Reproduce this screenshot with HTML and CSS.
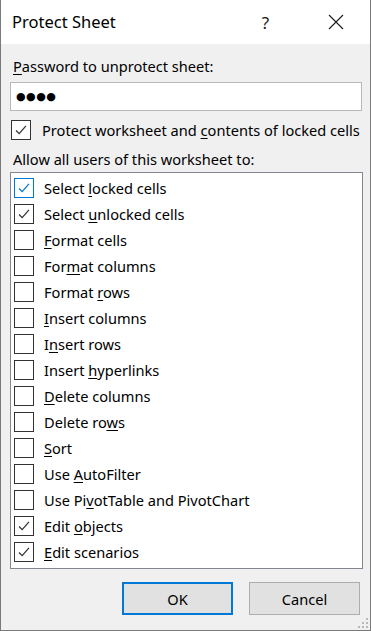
FILE: index.html
```html
<!DOCTYPE html>
<html lang="en">
<head>
  <meta charset="UTF-8">
  <title>Protect Sheet</title>
  <link rel="stylesheet" href="styles.css">
</head>
<body>
  <div class="dialog">
    <div class="titlebar">
      <span class="title">Protect Sheet</span>
      <span class="cap-btn help">?</span>
      <span class="cap-btn close">
        <svg width="16" height="16" viewBox="0 0 16 16"><path d="M1 1L15 15M15 1L1 15" stroke="#1a1a1a" stroke-width="1.1" fill="none"/></svg>
      </span>
    </div>

    <div class="content">
      <div class="label"><u>P</u>assword to unprotect sheet:</div>
      <div class="password"><span class="dots">&#9679;&#9679;&#9679;&#9679;</span></div>

      <label class="check-row protect">
        <span class="box checked">
          <svg viewBox="0 0 20 20"><path d="M4.5 10.5L8 14L15.5 5.5"/></svg>
        </span>
        <span>Protect worksheet and <u>c</u>ontents of locked cells</span>
      </label>

      <div class="label allow">Allow all users of this worksheet to:</div>

      <div class="listbox">
        <div class="item"><span class="box checked focus"><svg viewBox="0 0 20 20"><path d="M4.5 10.5L8 14L15.5 5.5"/></svg></span><span>Select <u>l</u>ocked cells</span></div>
        <div class="item"><span class="box checked"><svg viewBox="0 0 20 20"><path d="M4.5 10.5L8 14L15.5 5.5"/></svg></span><span>Select <u>u</u>nlocked cells</span></div>
        <div class="item"><span class="box"></span><span><u>F</u>ormat cells</span></div>
        <div class="item"><span class="box"></span><span>For<u>m</u>at columns</span></div>
        <div class="item"><span class="box"></span><span>Format <u>r</u>ows</span></div>
        <div class="item"><span class="box"></span><span><u>I</u>nsert columns</span></div>
        <div class="item"><span class="box"></span><span>I<u>n</u>sert rows</span></div>
        <div class="item"><span class="box"></span><span>Insert <u>h</u>yperlinks</span></div>
        <div class="item"><span class="box"></span><span><u>D</u>elete columns</span></div>
        <div class="item"><span class="box"></span><span>Delete ro<u>w</u>s</span></div>
        <div class="item"><span class="box"></span><span><u>S</u>ort</span></div>
        <div class="item"><span class="box"></span><span>Use <u>A</u>utoFilter</span></div>
        <div class="item"><span class="box"></span><span>Use Pi<u>v</u>otTable and PivotChart</span></div>
        <div class="item"><span class="box checked"><svg viewBox="0 0 20 20"><path d="M4.5 10.5L8 14L15.5 5.5"/></svg></span><span>Edit <u>o</u>bjects</span></div>
        <div class="item"><span class="box checked"><svg viewBox="0 0 20 20"><path d="M4.5 10.5L8 14L15.5 5.5"/></svg></span><span><u>E</u>dit scenarios</span></div>
      </div>

      <div class="buttons">
        <button class="btn default">OK</button>
        <button class="btn">Cancel</button>
      </div>
    </div>

    <svg class="grip" width="12" height="12" viewBox="0 0 12 12">
      <rect x="9" y="1" width="2" height="2" fill="#b8b8b8"/>
      <rect x="5" y="5" width="2" height="2" fill="#b8b8b8"/>
      <rect x="9" y="5" width="2" height="2" fill="#b8b8b8"/>
      <rect x="1" y="9" width="2" height="2" fill="#b8b8b8"/>
      <rect x="5" y="9" width="2" height="2" fill="#b8b8b8"/>
      <rect x="9" y="9" width="2" height="2" fill="#b8b8b8"/>
    </svg>
  </div>
</body>
</html>
```

FILE: styles.css
```css
* {
  padding: 0;
  margin: 0;
  box-sizing: border-box;
}

body {
  background: #f0f0f0;
  font-family: "Noto Sans", "Liberation Sans", sans-serif;
  font-size: 14.6px;
  color: #000000;
}

u {
  text-decoration-thickness: 1px;
  text-underline-offset: 2px;
}

.dialog {
  position: relative;
  width: 371px;
  height: 631px;
  background: #f0f0f0;
  border: 1px solid #7a7a7a;
  border-top: none;
  display: flex;
  flex-direction: column;
}

.titlebar {
  height: 44px;
  background: #ffffff;
  display: flex;
  align-items: center;
  padding-left: 11px;
}

.title {
  flex: 1;
  font-size: 16.5px;
  padding-bottom: 1px;
}

.cap-btn {
  width: 69px;
  height: 44px;
  display: flex;
  align-items: center;
  justify-content: center;
}

.help {
  font-size: 17px;
  color: #1a1a1a;
  margin-right: 1px;
}

.close svg {
  display: block;
}

.content {
  flex: 1;
  display: flex;
  flex-direction: column;
  padding: 0 9px;
}

.label {
  margin: 12px 0 0 3px;
  line-height: 20px;
}

.password {
  margin-top: 6px;
  height: 29px;
  width: 352px;
  background: #ffffff;
  border: 1px solid #b9b9b9;
  padding-left: 5px;
  display: flex;
  align-items: center;
}

.dots {
  font-family: "DejaVu Sans", sans-serif;
  font-size: 11px;
  letter-spacing: 0.5px;
}

.check-row {
  display: flex;
  align-items: center;
  gap: 11px;
  margin-top: 9px;
  padding-left: 1px;
  height: 20px;
  white-space: nowrap;
}

.allow {
  margin-top: 9px;
}

.box {
  width: 20px;
  height: 20px;
  flex: none;
  border: 1px solid #333333;
  background: #ffffff;
  display: flex;
}

.box svg {
  display: none;
  width: 18px;
  height: 18px;
}

.box.checked svg {
  display: block;
}

.box path {
  fill: none;
  stroke: #333333;
  stroke-width: 1.4;
}

.box.focus {
  border-color: #0078d7;
}

.box.focus path {
  stroke: #0078d7;
}

.listbox {
  margin-top: 3px;
  width: 353px;
  height: 397px;
  background: #ffffff;
  border: 1px solid #828790;
  padding: 2px 0 0 3px;
}

.item {
  height: 26px;
  display: flex;
  align-items: center;
  gap: 10px;
  white-space: nowrap;
}

.buttons {
  display: flex;
  justify-content: flex-end;
  gap: 16px;
  margin-top: 13px;
  padding-right: 1px;
}

.btn {
  width: 111px;
  height: 33px;
  background: #e1e1e1;
  border: 1px solid #adadad;
  font-family: inherit;
  font-size: 14.6px;
  color: #000000;
}

.btn.default {
  border: 2px solid #0078d7;
}

.grip {
  position: absolute;
  right: 1px;
  bottom: 1px;
}
```
